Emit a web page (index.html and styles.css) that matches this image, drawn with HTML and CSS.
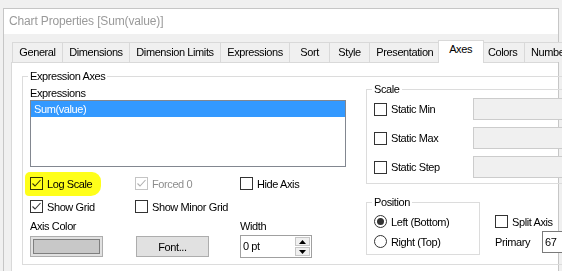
FILE: index.html
```html
<!DOCTYPE html>
<html lang="en">
<head>
    <meta charset="UTF-8">
    <meta name="viewport" content="width=device-width, initial-scale=1.0">
    <title>Chart Properties</title>
    <link rel="stylesheet" href="styles.css">
</head>
<body>
    <div class="window">
        <div class="titlebar">Chart Properties [Sum(value)]</div>

        <div class="dialog">
            <!-- Tab strip -->
            <div class="tabs">
                <div class="tab">General</div>
                <div class="tab">Dimensions</div>
                <div class="tab">Dimension Limits</div>
                <div class="tab">Expressions</div>
                <div class="tab">Sort</div>
                <div class="tab">Style</div>
                <div class="tab">Presentation</div>
                <div class="tab active">Axes</div>
                <div class="tab">Colors</div>
                <div class="tab">Number</div>
            </div>

            <div class="panel">
                <fieldset class="group axes-group">
                    <legend>Expression Axes</legend>
                    <div class="axes-body">

                        <!-- Left column -->
                        <div class="left-col">
                            <div class="label expr-label">Expressions</div>
                            <div class="listbox">
                                <div class="list-item selected">Sum(value)</div>
                            </div>

                            <div class="options">
                                <label class="check highlight">
                                    <svg class="box" width="13" height="13" viewBox="0 0 13 13"><rect x="0.5" y="0.5" width="12" height="12" fill="#fff" stroke="#333"/><polyline points="2.5,6.5 5,9 10.5,3" fill="none" stroke="#333" stroke-width="1.1"/></svg>
                                    <span>Log Scale</span>
                                </label>
                                <label class="check disabled">
                                    <svg class="box" width="13" height="13" viewBox="0 0 13 13"><rect x="0.5" y="0.5" width="12" height="12" fill="#fff" stroke="#c4c4c4"/><polyline points="2.5,6.5 5,9 10.5,3" fill="none" stroke="#b0b0b0" stroke-width="1.1"/></svg>
                                    <span>Forced 0</span>
                                </label>
                                <label class="check">
                                    <svg class="box" width="13" height="13" viewBox="0 0 13 13"><rect x="0.5" y="0.5" width="12" height="12" fill="#fff" stroke="#333"/></svg>
                                    <span>Hide Axis</span>
                                </label>

                                <label class="check">
                                    <svg class="box" width="13" height="13" viewBox="0 0 13 13"><rect x="0.5" y="0.5" width="12" height="12" fill="#fff" stroke="#333"/><polyline points="2.5,6.5 5,9 10.5,3" fill="none" stroke="#333" stroke-width="1.1"/></svg>
                                    <span>Show Grid</span>
                                </label>
                                <label class="check">
                                    <svg class="box" width="13" height="13" viewBox="0 0 13 13"><rect x="0.5" y="0.5" width="12" height="12" fill="#fff" stroke="#333"/></svg>
                                    <span>Show Minor Grid</span>
                                </label>
                                <div></div>

                                <div class="label">Axis Color</div>
                                <div></div>
                                <div class="label">Width</div>

                                <button class="color-btn"><span class="swatch"></span></button>
                                <button class="btn">Font...</button>
                                <div class="spinner">
                                    <span class="spin-value">0 pt</span>
                                    <div class="spin-buttons">
                                        <span class="spin up"><svg width="7" height="4" viewBox="0 0 7 4"><polygon points="0,4 3.5,0 7,4" fill="#000"/></svg></span>
                                        <span class="spin down"><svg width="7" height="4" viewBox="0 0 7 4"><polygon points="0,0 3.5,4 7,0" fill="#000"/></svg></span>
                                    </div>
                                </div>
                            </div>
                        </div>

                        <!-- Right column -->
                        <div class="right-col">
                            <fieldset class="group scale-group">
                                <legend>Scale</legend>
                                <div class="scale-row">
                                    <label class="check">
                                        <svg class="box" width="13" height="13" viewBox="0 0 13 13"><rect x="0.5" y="0.5" width="12" height="12" fill="#fff" stroke="#333"/></svg>
                                        <span>Static Min</span>
                                    </label>
                                    <div class="field disabled-field"></div>
                                </div>
                                <div class="scale-row">
                                    <label class="check">
                                        <svg class="box" width="13" height="13" viewBox="0 0 13 13"><rect x="0.5" y="0.5" width="12" height="12" fill="#fff" stroke="#333"/></svg>
                                        <span>Static Max</span>
                                    </label>
                                    <div class="field disabled-field"></div>
                                </div>
                                <div class="scale-row">
                                    <label class="check">
                                        <svg class="box" width="13" height="13" viewBox="0 0 13 13"><rect x="0.5" y="0.5" width="12" height="12" fill="#fff" stroke="#333"/></svg>
                                        <span>Static Step</span>
                                    </label>
                                    <div class="field disabled-field"></div>
                                </div>
                            </fieldset>

                            <div class="position-row">
                                <fieldset class="group position-group">
                                    <legend>Position</legend>
                                    <label class="radio">
                                        <svg width="13" height="13" viewBox="0 0 13 13"><circle cx="6.5" cy="6.5" r="6" fill="#fff" stroke="#333"/><circle cx="6.5" cy="6.5" r="3.5" fill="#333"/></svg>
                                        <span>Left (Bottom)</span>
                                    </label>
                                    <label class="radio">
                                        <svg width="13" height="13" viewBox="0 0 13 13"><circle cx="6.5" cy="6.5" r="6" fill="#fff" stroke="#333"/></svg>
                                        <span>Right (Top)</span>
                                    </label>
                                </fieldset>

                                <div class="split-col">
                                    <label class="check">
                                        <svg class="box" width="13" height="13" viewBox="0 0 13 13"><rect x="0.5" y="0.5" width="12" height="12" fill="#fff" stroke="#333"/></svg>
                                        <span>Split Axis</span>
                                    </label>
                                    <div class="primary-row">
                                        <span class="primary-label">Primary</span>
                                        <div class="field text-field">67</div>
                                    </div>
                                </div>
                            </div>
                        </div>

                    </div>
                </fieldset>
            </div>
        </div>
    </div>
</body>
</html>
```

FILE: styles.css
```css
* {
    box-sizing: border-box;
}

body {
    margin: 0;
    width: 562px;
    height: 271px;
    overflow: hidden;
    background: #f0f0f0;
    font-family: "Liberation Sans", Arial, sans-serif;
    font-size: 11px;
    letter-spacing: -0.4px;
    color: #000;
}

.window {
    margin: 8px 0 0 3px;
    width: 556px;
    border: 1px solid #c6c6c6;
    border-bottom: none;
}

.titlebar {
    height: 25px;
    line-height: 25px;
    padding-left: 5px;
    background: #fff;
    color: #9a9a9a;
    font-size: 12px;
    letter-spacing: -0.15px;
}

.dialog {
    height: 240px;
    padding: 8px 0 0 7px;
    background: #f0f0f0;
}

/* Tabs */
.tabs {
    display: flex;
    height: 20px;
    margin-left: 1px;
    white-space: nowrap;
}

.tab {
    flex: none;
    min-width: 41px;
    height: 20px;
    line-height: 19px;
    padding: 0 6.3px;
    text-align: center;
    border: 1px solid #d9d9d9;
    border-bottom: none;
    background: #f0f0f0;
}

.tab + .tab {
    margin-left: -1px;
}

.tab.active {
    position: relative;
    z-index: 1;
    min-width: 46px;
    height: 23px;
    margin: -2px -2px -1px -3px;
    padding: 0 8px;
    line-height: 17px;
    background: #fff;
}

.panel {
    height: 220px;
    padding: 6px 0 0 10px;
    background: #fff;
    border: 1px solid #d9d9d9;
    border-right: none;
}

/* Group boxes */
.group {
    margin: 0;
    min-width: 0;
    border: 1px solid #dcdcdc;
}

.group legend {
    margin-left: -2px;
    padding: 0 2px;
    line-height: 14px;
}

.axes-group {
    width: 600px;
    padding: 0 0 5px 7px;
}

.axes-body {
    display: flex;
    gap: 20px;
}

.left-col {
    width: 316px;
}

.label {
    line-height: 14px;
}

.expr-label {
    margin-top: 3px;
}

.listbox {
    height: 67px;
    border: 1px solid #828790;
    background: #fff;
}

.list-item {
    height: 16px;
    line-height: 16px;
    padding-left: 3px;
}

.list-item.selected {
    background: #3399ff;
    color: #fff;
}

.options {
    display: grid;
    grid-template-columns: 105px 105px 106px;
    grid-template-rows: 23px 20px 17px 23px;
    align-items: start;
    margin-top: 9px;
}

.check,
.radio {
    display: flex;
    align-items: center;
    gap: 4px;
    height: 15px;
    white-space: nowrap;
}

.check .box,
.radio svg {
    flex: none;
}

.check.disabled {
    color: #8d8d8d;
}

.highlight {
    position: relative;
}

.highlight::after {
    content: "";
    position: absolute;
    left: -5px;
    top: -4px;
    width: 76px;
    height: 24px;
    background: #ffff1a;
    mix-blend-mode: multiply;
    border-radius: 5px 9px 10px 4px;
}

/* Buttons */
.btn,
.color-btn {
    width: 73px;
    height: 21px;
    margin: 0;
    border: 1px solid #adadad;
    background: #e1e1e1;
    font: inherit;
    letter-spacing: inherit;
    color: #000;
}

.color-btn {
    padding: 2px;
}

.swatch {
    display: block;
    height: 100%;
    border: 1px solid #7f7f7f;
    background: #c8c8c8;
}

.btn {
    margin-left: 1px;
}

.spinner {
    display: flex;
    justify-content: space-between;
    width: 72px;
    height: 23px;
    margin-top: -1px;
    padding: 1px 1px 1px 2px;
    border: 1px solid #a0a0a0;
    background: #fff;
}

.spin-value {
    line-height: 19px;
}

.spin-buttons {
    display: flex;
    flex-direction: column;
    gap: 1px;
    width: 15px;
}

.spin {
    display: flex;
    align-items: center;
    justify-content: center;
    height: 9px;
    border: 1px solid #c6c6c6;
    background: #f0f0f0;
}

/* Right column */
.right-col {
    width: 250px;
    margin-top: -1px;
}

.scale-group {
    padding: 2px 0 5px 7px;
}

.scale-row {
    display: flex;
    align-items: center;
    height: 22px;
}

.scale-row + .scale-row {
    margin-top: 7px;
}

.scale-row .check {
    width: 99px;
}

.field {
    height: 22px;
    border: 1px solid #ccc;
}

.disabled-field {
    width: 130px;
    background: #f0f0f0;
}

.position-row {
    display: flex;
    margin-top: 11px;
}

.position-group {
    width: 114px;
    padding: 5px 0 5px 7px;
}

.position-group .radio + .radio {
    margin-top: 5px;
}

.split-col {
    margin: 19px 0 0 15px;
}

.primary-row {
    display: flex;
    align-items: center;
    margin-top: 2px;
}

.primary-label {
    width: 47px;
}

.text-field {
    width: 60px;
    padding-left: 2px;
    line-height: 20px;
    border-color: #7a7a7a;
    background: #fff;
}
```
